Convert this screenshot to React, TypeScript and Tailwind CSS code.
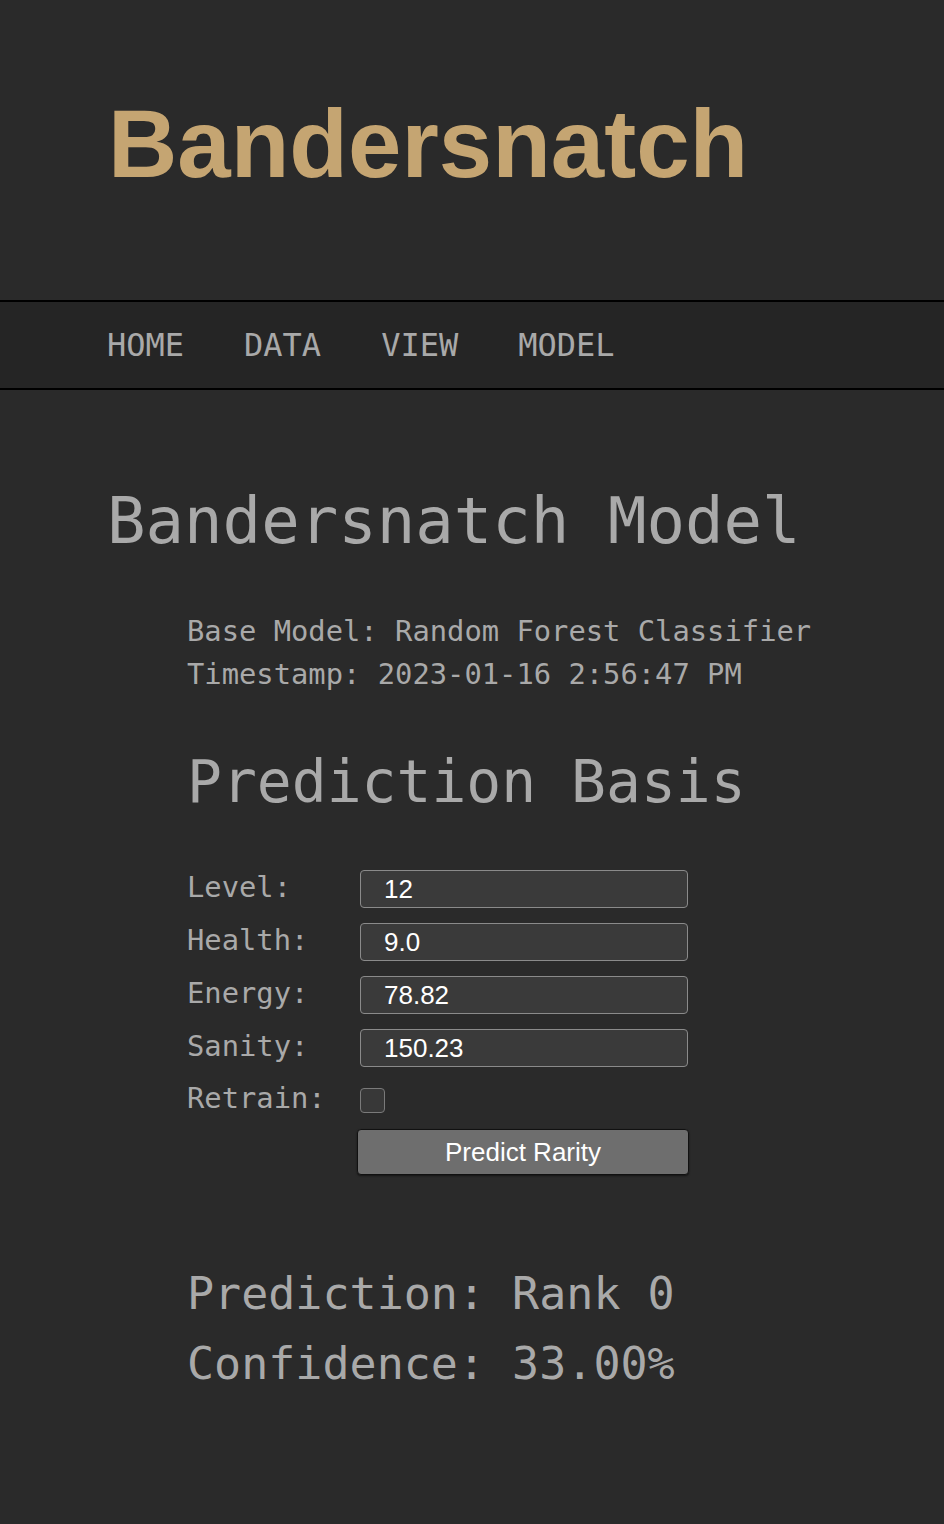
import React from "react";

const MONO = "font-['DejaVu_Sans_Mono',monospace]";

const NAV_LINKS = ["HOME", "DATA", "VIEW", "MODEL"];

const FIELDS = [
  { label: "Level:", value: "12" },
  { label: "Health:", value: "9.0" },
  { label: "Energy:", value: "78.82" },
  { label: "Sanity:", value: "150.23" },
];

function Field({ label, value }: { label: string; value: string }) {
  return (
    <div className="flex items-center">
      <label className="w-[173px] -translate-y-[2px] text-[28.8px] leading-none">{label}</label>
      <input
        type="text"
        defaultValue={value}
        className="h-[38px] w-[328px] rounded-[4px] border-[1.5px] border-[#8a8a8a] bg-[#3a3a3a] pl-[23px] font-['Liberation_Sans',Arial,sans-serif] text-[26px] text-white outline-none"
      />
    </div>
  );
}

export default function App() {
  return (
    <div className={`min-h-[1524px] bg-[#2a2a2a] text-[#a9a9a9] ${MONO}`}>
      {/* Header */}
      <header className="h-[300px] pl-[108px] pt-[96px]">
        <h1 className="font-['Liberation_Sans',Arial,sans-serif] text-[96px] font-bold leading-none text-[#c5a572]">
          Bandersnatch
        </h1>
      </header>

      {/* Nav */}
      <nav className="flex h-[90px] items-center gap-[60px] border-y-2 border-black bg-[#252525] pl-[107px]">
        {NAV_LINKS.map((link) => (
          <a key={link} href="#" className="text-[32px] leading-none text-[#a9a9a9]">
            {link}
          </a>
        ))}
      </nav>

      <main className="pl-[107px] pt-[99px]">
        <h2 className="text-[64px] leading-none">Bandersnatch Model</h2>

        <section className="mt-[57px] pl-[80px]">
          <div className="text-[28.8px] leading-[43px]">
            <div>Base Model: Random Forest Classifier</div>
            <div>Timestamp: 2023-01-16 2:56:47 PM</div>
          </div>

          <h3 className="mt-[57px] text-[58px] leading-none">Prediction Basis</h3>

          <form className="mt-[59px] flex flex-col gap-[15px]">
            {FIELDS.map((f) => (
              <Field key={f.label} label={f.label} value={f.value} />
            ))}
            <div className="flex h-[37px] items-center">
              <label className="w-[173px] -translate-y-[2px] text-[28.8px] leading-none">Retrain:</label>
              <input
                type="checkbox"
                className="h-[25px] w-[25px] appearance-none rounded-[4px] border-[1.5px] border-[#7a7a7a] bg-[#383838]"
              />
            </div>
            <button
              type="button"
              className="ml-[170px] -mt-[5px] h-[46px] w-[332px] rounded-[4px] border-[1.5px] border-[#111] bg-[#6e6e6e] font-['Liberation_Sans',Arial,sans-serif] text-[26px] text-white shadow-[0_1px_2px_rgba(0,0,0,0.5)]"
            >
              Predict Rarity
            </button>
          </form>

          <div className="mt-[84px] text-[45px] leading-[70px]">
            <div>Prediction: Rank 0</div>
            <div>Confidence: 33.00%</div>
          </div>
        </section>
      </main>
    </div>
  );
}
